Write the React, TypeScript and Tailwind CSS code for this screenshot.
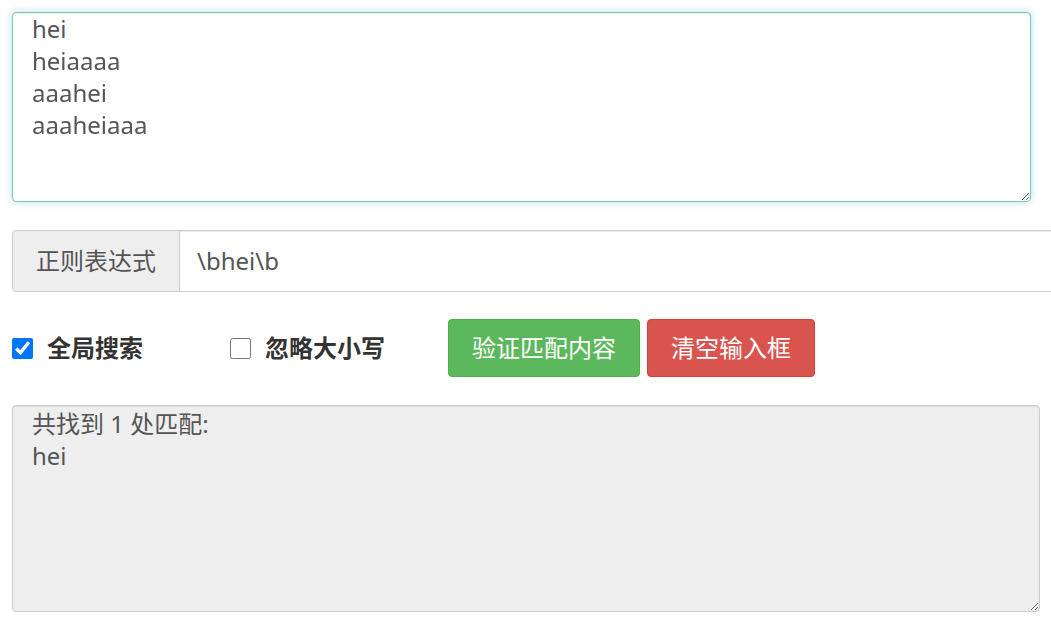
import React from "react";

const FONT = "font-['Noto_Sans','Noto_Sans_CJK_SC',sans-serif]";

const App: React.FC = () => {
  return (
    <div className={`${FONT} w-[1051px] h-[629px] overflow-hidden bg-white pl-3 pt-3 text-[24px] text-[#555]`}>
      {/* input text */}
      <textarea
        autoFocus
        defaultValue={"hei\nheiaaaa\naaahei\naaaheiaaa\n"}
        className="block w-[1019px] h-[190px] rounded-[4px] border border-[#7acb9f] bg-white pl-[19px] pr-3 pt-0 leading-[32px] text-[#555] outline-none shadow-[inset_0_1px_1px_rgba(0,0,0,0.075),0_0_8px_rgba(102,175,233,0.45)]"
      />

      {/* regex input group */}
      <div className="mt-[28px] flex h-[62px] w-[1060px]">
        <div className="flex items-center rounded-l-[4px] border border-[#ccc] bg-[#eee] px-[23px] text-[#555]">
          正则表达式
        </div>
        <input
          readOnly
          value={"\\bhei\\b"}
          className="flex-1 border border-l-0 border-[#ccc] pl-[17px] text-[#555] outline-none shadow-[inset_0_1px_1px_rgba(0,0,0,0.075)]"
        />
      </div>

      {/* options + buttons */}
      <div className="mt-[27px] flex h-[58px] items-center">
        <label className="flex items-center font-bold text-[#333]">
          <input type="checkbox" defaultChecked className="h-[21px] w-[21px] accent-[#0075ff]" />
          <span className="ml-[14px]">全局搜索</span>
        </label>
        <label className="ml-[87px] flex items-center font-bold text-[#333]">
          <input type="checkbox" className="h-[21px] w-[21px]" />
          <span className="ml-[14px]">忽略大小写</span>
        </label>
        <button className="ml-[63px] h-[58px] rounded-[4px] border border-[#4cae4c] bg-[#5cb85c] px-[23px] text-white">
          验证匹配内容
        </button>
        <button className="ml-[7px] h-[58px] rounded-[4px] border border-[#d43f3a] bg-[#d9534f] px-[23px] text-white">
          清空输入框
        </button>
      </div>

      {/* result */}
      <textarea
        readOnly
        value={"共找到 1 处匹配:\nhei"}
        className="mt-[28px] block h-[207px] w-[1028px] rounded-[4px] border border-[#ccc] bg-[#eee] pl-[19px] pt-[2px] leading-[32px] text-[#555] outline-none shadow-[inset_0_1px_1px_rgba(0,0,0,0.075)]"
      />
    </div>
  );
};

export default App;
